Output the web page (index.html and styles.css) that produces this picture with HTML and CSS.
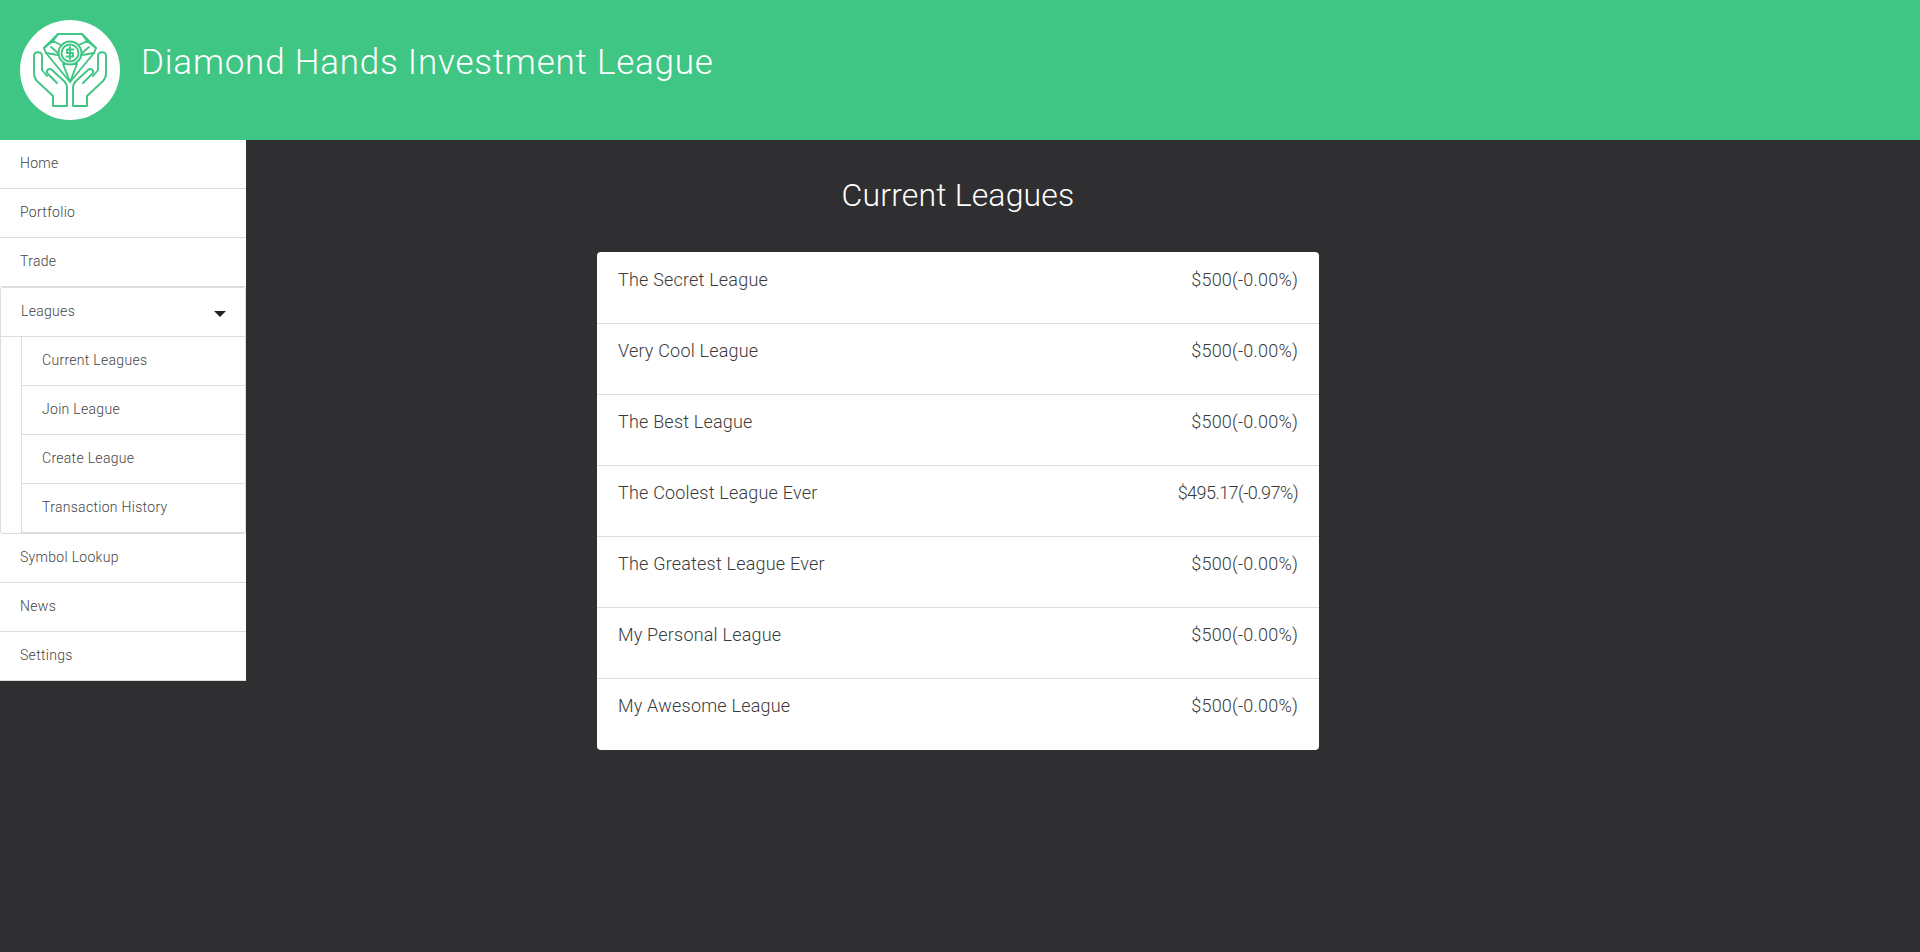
FILE: index.html
```html
<!DOCTYPE html>
<html lang="en">
<head>
  <meta charset="UTF-8">
  <meta name="viewport" content="width=device-width, initial-scale=1.0">
  <title>Diamond Hands Investment League</title>
  <link rel="stylesheet" href="styles.css">
</head>
<body>
  <header class="topbar">
    <div class="logo">
      <svg viewBox="0 0 100 100" width="100" height="100" fill="none" stroke="#3fc584" stroke-width="1.9" stroke-linejoin="round" stroke-linecap="round">
        <!-- diamond -->
        <path d="M38 14 H62 L76 28 L74 33 L50 62 L26 33 L24 28 Z"/>
        <path d="M38 14 L33 21 L24 28 M62 14 L67 21 L76 28 M33 21 L41 25 M67 21 L59 25 M31 27 L38 33 M69 27 L62 33 M26 33 L38 35 M74 33 L62 35 M43 44 L50 62 L57 44 Z"/>
        <circle cx="50" cy="33" r="11.5" fill="#fff"/>
        <circle cx="50" cy="33" r="8.5"/>
        <path d="M53.5 29.5 H47 V33 H53 V36.5 H46.5 M50 27 V39"/>
        <!-- hands -->
        <g id="hand">
          <path d="M14 36 V53 C14 57 15 59 17 61 L33 76 V86 H47 V68 C47 65 46 63 44 61 L32 50 C29 47 25 51 28 54 L37 63"/>
          <path d="M14 36 C14 31 22 31 22 36 V50 L27 56"/>
        </g>
        <use href="#hand" transform="translate(100 0) scale(-1 1)"/>
      </svg>
    </div>
    <h1 class="brand">Diamond Hands Investment League</h1>
  </header>

  <div class="layout">
    <nav class="sidebar">
      <a class="nav-item" href="#">Home</a>
      <a class="nav-item" href="#">Portfolio</a>
      <a class="nav-item" href="#">Trade</a>
      <div class="nav-group">
        <a class="nav-item nav-toggle" href="#">Leagues <span class="caret"></span></a>
        <div class="subnav">
          <a class="nav-item" href="#">Current Leagues</a>
          <a class="nav-item" href="#">Join League</a>
          <a class="nav-item" href="#">Create League</a>
          <a class="nav-item" href="#">Transaction History</a>
        </div>
      </div>
      <a class="nav-item" href="#">Symbol Lookup</a>
      <a class="nav-item" href="#">News</a>
      <a class="nav-item" href="#">Settings</a>
    </nav>

    <main class="content">
      <h2 class="page-title">Current Leagues</h2>
      <ul class="league-list">
        <li class="league-row"><span>The Secret League</span><span>$500(-0.00%)</span></li>
        <li class="league-row"><span>Very Cool League</span><span>$500(-0.00%)</span></li>
        <li class="league-row"><span>The Best League</span><span>$500(-0.00%)</span></li>
        <li class="league-row"><span>The Coolest League Ever</span><span class="value-long">$495.17(-0.97%)</span></li>
        <li class="league-row"><span>The Greatest League Ever</span><span>$500(-0.00%)</span></li>
        <li class="league-row"><span>My Personal League</span><span>$500(-0.00%)</span></li>
        <li class="league-row"><span>My Awesome League</span><span>$500(-0.00%)</span></li>
      </ul>
    </main>
  </div>
</body>
</html>
```
FILE: styles.css
```css
* {
  box-sizing: border-box;
}
html, body {
  height: 100%;
}
body {
  margin: 0;
  background-color: #2f2f31;
  font-family: Roboto, "Liberation Sans", sans-serif;
  font-weight: 300;
  overflow: hidden;
}
.topbar {
  display: flex;
  align-items: center;
  height: 140px;
  padding-left: 20px;
  background-color: #3fc584;
}
.logo {
  width: 100px;
  height: 100px;
  border-radius: 50%;
  background-color: white;
}
.logo svg {
  display: block;
}
.brand {
  margin: -15px 0 0 21px;
  color: white;
  font-size: 35px;
  font-weight: 300;
  letter-spacing: 0.78px;
}
.layout {
  position: relative;
  display: flex;
  justify-content: center;
  padding-right: 4px;
}
.sidebar {
  position: absolute;
  left: 0;
  top: 0;
  display: flex;
  flex-direction: column;
  width: 246px;
  background-color: white;
}
.nav-item {
  display: block;
  height: 49px;
  padding: 15px 20px 0;
  border-bottom: 1px solid #ddd;
  color: #444;
  font-size: 14px;
  letter-spacing: 0.3px;
  text-decoration: none;
}
.nav-group {
  border: 1px solid #ddd;
  border-radius: 3px;
}
.nav-toggle {
  position: relative;
}
.caret {
  position: absolute;
  right: 19px;
  top: 23px;
  border-left: 6px solid transparent;
  border-right: 6px solid transparent;
  border-top: 6px solid #222;
}
.subnav {
  margin-left: 20px;
  border-left: 1px solid #ddd;
}
.content {
  width: 722px;
}
.page-title {
  margin: 33px 0 35px;
  color: white;
  font-size: 32px;
  font-weight: 300;
  line-height: 44px;
  letter-spacing: 0.15px;
  text-align: center;
}
.league-list {
  margin: 0;
  padding: 1px 0 0;
  list-style: none;
  background-color: white;
  border-radius: 4px;
}
.league-row {
  display: flex;
  justify-content: space-between;
  height: 71px;
  padding: 16px 21px 0;
  border-bottom: 1px solid #ddd;
  color: #3a3a3a;
  font-size: 18px;
  letter-spacing: 0.2px;
}
.league-row:last-child {
  border-bottom: none;
}
.value-long {
  letter-spacing: -0.55px;
}
```
